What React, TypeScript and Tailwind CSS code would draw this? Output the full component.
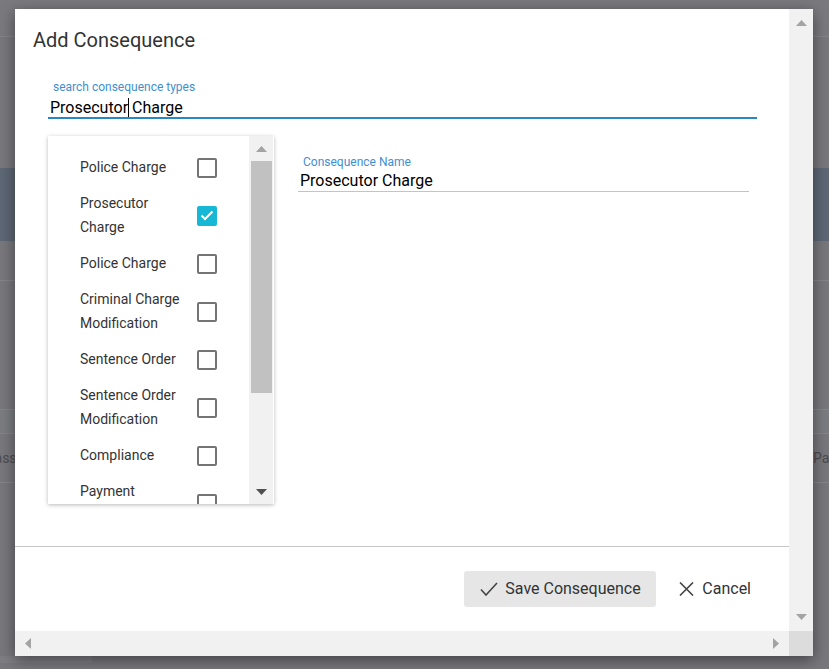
import React from 'react';

const ITEMS: { label: string; checked?: boolean }[] = [
  { label: 'Police Charge' },
  { label: 'Prosecutor Charge', checked: true },
  { label: 'Police Charge' },
  { label: 'Criminal Charge Modification' },
  { label: 'Sentence Order' },
  { label: 'Sentence Order Modification' },
  { label: 'Compliance' },
  { label: 'Payment Modification' },
];

function Arrow({ dir, color = '#a3a3a3' }: { dir: 'up' | 'down' | 'left' | 'right'; color?: string }) {
  const pts = {
    up: '0,6 5.5,0 11,6',
    down: '0,0 11,0 5.5,6',
    left: '6,0 6,11 0,5.5',
    right: '0,0 6,5.5 0,11',
  }[dir];
  const horiz = dir === 'left' || dir === 'right';
  return (
    <svg width={horiz ? 6 : 11} height={horiz ? 11 : 6} viewBox={horiz ? '0 0 6 11' : '0 0 11 6'}>
      <polygon points={pts} fill={color} />
    </svg>
  );
}

function Checkbox({ checked }: { checked?: boolean }) {
  if (checked) {
    return (
      <div className="w-[20px] h-[20px] rounded-[2px] bg-[#17b8d5] flex items-center justify-center shrink-0">
        <svg width="14" height="11" viewBox="0 0 14 11">
          <polyline points="1.5,5.5 5,9 12.5,1.5" fill="none" stroke="#fff" strokeWidth="2" />
        </svg>
      </div>
    );
  }
  return <div className="w-[20px] h-[20px] rounded-[2px] border-2 border-[#747474] shrink-0" />;
}

function ConsequenceList() {
  return (
    <div className="w-[226px] h-[368px] bg-white flex shadow-[0_1px_4px_rgba(0,0,0,0.28)] shrink-0">
      <div className="flex-1 overflow-hidden pt-[7px]">
        {ITEMS.map((item, i) => (
          <div key={i} className="flex items-center min-h-[48px] pl-[32px]">
            <div className="w-[110px] text-[14px] leading-[24px] text-[#333]">{item.label}</div>
            <div className="ml-[7px] mt-px">
              <Checkbox checked={item.checked} />
            </div>
          </div>
        ))}
      </div>
      {/* inner scrollbar */}
      <div className="w-[24px] mr-px bg-[#f1f1f1] flex flex-col">
        <div className="h-[25px] flex items-center justify-center">
          <Arrow dir="up" />
        </div>
        <div className="h-[232px] ml-[2px] w-[21px] bg-[#c1c1c1]" />
        <div className="flex-1" />
        <div className="h-[25px] flex items-center justify-center">
          <Arrow dir="down" color="#505050" />
        </div>
      </div>
    </div>
  );
}

function Background() {
  return (
    <div className="flex flex-col">
      <div className="h-[36px] bg-[#7a797e]" />
      <div className="h-px bg-[#85848a]" />
      <div className="h-[131px]" />
      <div className="h-[73px] bg-[#5d6775]" />
      <div className="h-[39px]" />
      <div className="h-px bg-[#86858a]" />
      <div className="h-[128px]" />
      <div className="h-px bg-[#86858a]" />
      <div className="h-[23px] bg-[#7b7c81]" />
      <div className="h-px bg-[#86858a]" />
      <div className="h-[48px] flex items-center justify-between text-[14px] text-[#4d4c51]">
        <span className="-ml-[18px]">Class</span>
        <span className="mr-[-14px]">Pays</span>
      </div>
      <div className="h-px bg-[#86858a]" />
      <div className="h-[173px]" />
      <div className="h-[7px] w-[92px] bg-[#7e7d82]" />
    </div>
  );
}

export default function App() {
  return (
    <div className="relative w-[829px] h-[669px] overflow-hidden bg-[#78777c] font-['Roboto',sans-serif]">
      <Background />

      {/* Dialog */}
      <div className="absolute left-[15px] top-[9px] w-[798px] h-[647px] bg-white flex flex-col shadow-[0_4px_14px_rgba(0,0,0,0.45)]">
        <div className="flex flex-1">
          <div className="flex-1 flex flex-col">
            <h2 className="pt-[17px] pl-[18px] text-[20px] leading-[28px] text-[#333]">Add Consequence</h2>

            {/* search */}
            <div className="mt-[26px] ml-[33px] w-[709px] border-b-2 border-[#2a87c6]">
              <div className="pl-[5px] text-[12px] leading-[14px] text-[#3f8fd0]">search consequence types</div>
              <div className="mt-[4px] pl-[2px] text-[16px] leading-[19px] text-black">
                Prosecutor
                <span className="inline-block w-px h-[19px] bg-black align-top -mr-px" /> Charge
              </div>
            </div>

            <div className="flex mt-[17px] ml-[33px]">
              <ConsequenceList />
              <div className="ml-[24px] w-[451px] mt-[19px] self-start border-b border-[#c4c4c4]">
                <div className="pl-[5px] text-[12px] leading-[14px] text-[#3f8fd0]">Consequence Name</div>
                <div className="mt-[2px] pl-[2px] text-[16px] leading-[20px] text-black">Prosecutor Charge</div>
              </div>
            </div>

            <div className="mt-[42px] h-px bg-[#c6c6c6]" />

            <div className="mt-[24px] flex justify-end pr-[22px]">
              <button className="h-[36px] w-[192px] rounded-[3px] bg-[#e6e6e6] flex items-center pl-[16px] text-[16px] text-[#333]">
                <svg width="18" height="14" viewBox="0 0 18 14" className="mr-[7px]">
                  <polyline points="1,7.5 6,13 17,1" fill="none" stroke="#444" strokeWidth="1.6" />
                </svg>
                Save Consequence
              </button>
              <button className="h-[36px] ml-[7px] px-[16px] flex items-center text-[16px] text-[#333]">
                <svg width="15" height="14" viewBox="0 0 15 14" className="mr-[8px]">
                  <path d="M1 0.5 L14 13.5 M14 0.5 L1 13.5" stroke="#444" strokeWidth="1.6" fill="none" />
                </svg>
                Cancel
              </button>
            </div>
          </div>

          {/* page vertical scrollbar */}
          <div className="w-[24px] bg-[#f1f1f1] flex flex-col items-center justify-between py-[11px]">
            <Arrow dir="up" />
            <Arrow dir="down" />
          </div>
        </div>

        {/* horizontal scrollbar */}
        <div className="h-[25px] flex">
          <div className="flex-1 bg-[#f1f1f1] flex items-center justify-between px-[10px]">
            <Arrow dir="left" />
            <Arrow dir="right" />
          </div>
          <div className="w-[24px] bg-[#dcdcdc]" />
        </div>
      </div>
    </div>
  );
}
